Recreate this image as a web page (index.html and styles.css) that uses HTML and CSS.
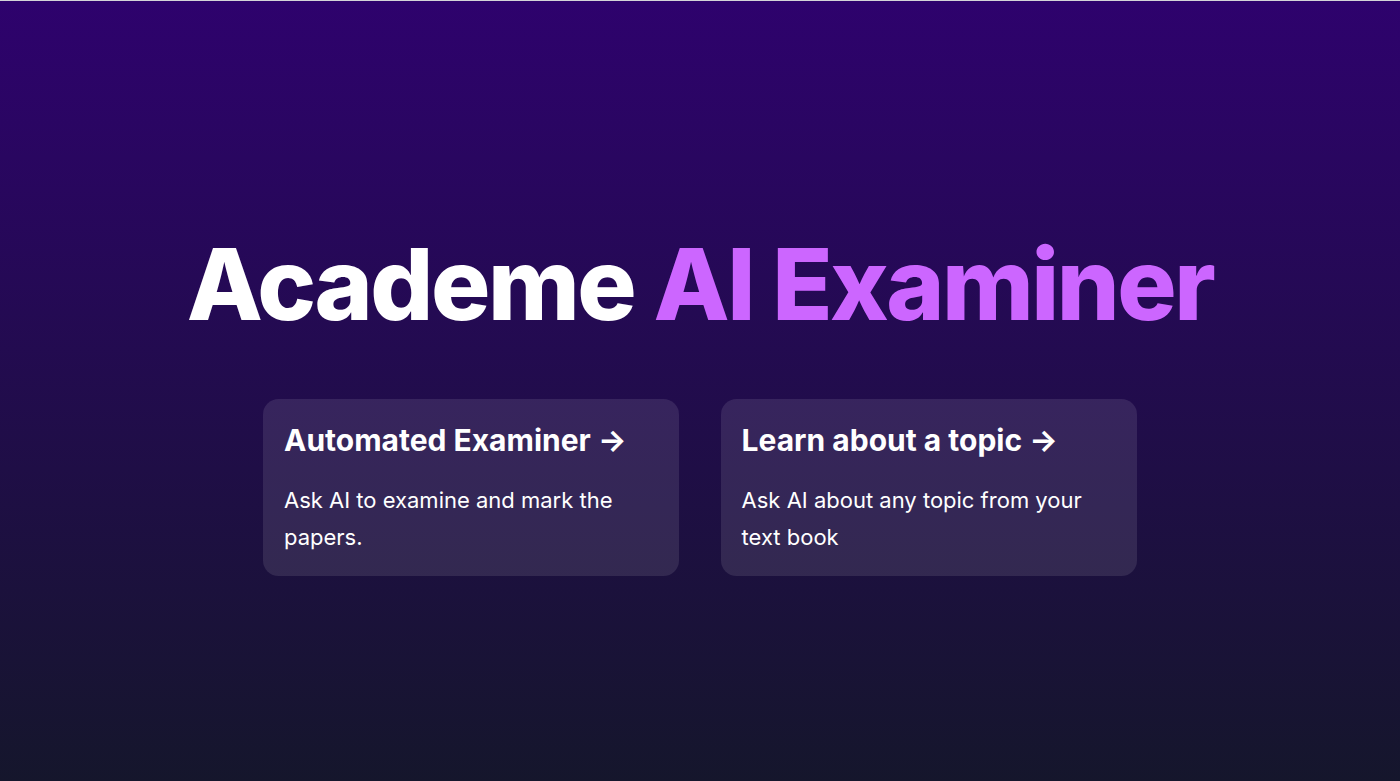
FILE: index.html
```html
<!DOCTYPE html>
<html lang="en">
<head>
<meta charset="utf-8">
<title>Academe AI Examiner</title>
<link rel="stylesheet" href="styles.css">
</head>
<body>
<main class="main">
  <div class="container">
    <h1 class="title">Academe <span class="accent">AI Examiner</span></h1>
    <div class="cards">
      <a class="card" href="#">
        <h3 class="card-title">Automated Examiner →</h3>
        <div class="card-text">Ask AI to examine and mark the papers.</div>
      </a>
      <a class="card" href="#">
        <h3 class="card-title">Learn about a topic →</h3>
        <div class="card-text">Ask AI about any topic from your text book</div>
      </a>
    </div>
  </div>
</main>
</body>
</html>
```
FILE: styles.css
```css
html, body {
  margin: 0;
  padding: 0;
}
body {
  font-family: Inter, "Noto Sans", sans-serif;
  border-top: 1px solid #d4d4d8;
  box-sizing: border-box;
}
.main {
  min-height: 780px;
  display: flex;
  flex-direction: column;
  align-items: center;
  justify-content: center;
  background: linear-gradient(to bottom, #2e026d, #15162c);
  color: #fff;
}
.container {
  display: flex;
  flex-direction: column;
  align-items: center;
  justify-content: center;
  gap: 37px;
  padding: 0 20.8px;
}
.title {
  margin: 0;
  font-size: 99px;
  line-height: 156px;
  font-weight: 800;
  letter-spacing: -0.025em;
  color: #fff;
}
.accent {
  color: hsl(280, 100%, 70%);
}
.cards {
  display: grid;
  grid-template-columns: 416px 416px;
  gap: 41.6px;
}
.card {
  display: flex;
  flex-direction: column;
  gap: 20.8px;
  padding: 20.8px;
  border-radius: 15.6px;
  background: rgba(255, 255, 255, 0.1);
  color: #fff;
  text-decoration: none;
}
.card-title {
  margin: 0;
  font-size: 30px;
  line-height: 41.6px;
  font-weight: 700;
}
.card-text {
  font-size: 22px;
  line-height: 36.4px;
}
```
